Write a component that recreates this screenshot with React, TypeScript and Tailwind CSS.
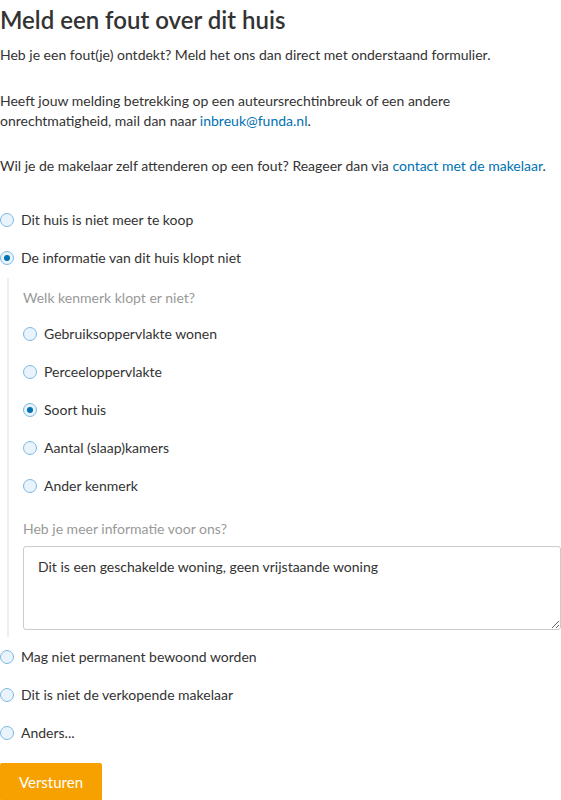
import { useState } from "react";

const outerTop = [
  { id: "niet-te-koop", label: "Dit huis is niet meer te koop" },
  { id: "info-klopt-niet", label: "De informatie van dit huis klopt niet" },
];

const outerBottom = [
  { id: "niet-bewoond", label: "Mag niet permanent bewoond worden" },
  { id: "niet-makelaar", label: "Dit is niet de verkopende makelaar" },
  { id: "anders", label: "Anders..." },
];

const kenmerken = [
  "Gebruiksoppervlakte wonen",
  "Perceeloppervlakte",
  "Soort huis",
  "Aantal (slaap)kamers",
  "Ander kenmerk",
];

function Radio({ checked, label, onClick }: { checked: boolean; label: string; onClick: () => void }) {
  return (
    <label className="flex items-center gap-[7px] h-5 cursor-pointer" onClick={onClick}>
      <span className="w-[14px] h-[14px] rounded-full border border-[#7db9e3] bg-[#e8f3fb] flex items-center justify-center shrink-0">
        {checked && <span className="w-[6px] h-[6px] rounded-full bg-[#0071b3]" />}
      </span>
      <span>{label}</span>
    </label>
  );
}

export default function App() {
  const [reason, setReason] = useState("info-klopt-niet");
  const [kenmerk, setKenmerk] = useState("Soort huis");
  const [info, setInfo] = useState("Dit is een geschakelde woning, geen vrijstaande woning");

  return (
    <div className="bg-white min-h-[800px] pt-[5px] font-['Lato',sans-serif] text-[14px] leading-5 text-[#333]">
      <h1 className="text-[24px] leading-[30px] font-semibold">Meld een fout over dit huis</h1>
      <p className="mt-[10px]">Heb je een fout(je) ontdekt? Meld het ons dan direct met onderstaand formulier.</p>
      <p className="mt-[26px]">
        Heeft jouw melding betrekking op een auteursrechtinbreuk of een andere
        <br />
        onrechtmatigheid, mail dan naar <a className="text-[#0071b3]" href="#">inbreuk@funda.nl</a>.
      </p>
      <p className="mt-[25px]">
        Wil je de makelaar zelf attenderen op een fout? Reageer dan via{" "}
        <a className="text-[#0071b3]" href="#">contact met de makelaar</a>.
      </p>

      <div className="mt-[34px] flex flex-col gap-[18px]">
        {outerTop.map(o => (
          <Radio key={o.id} checked={reason === o.id} label={o.label} onClick={() => setReason(o.id)} />
        ))}
      </div>

      <div className="mt-[10px] ml-[7px] border-l-2 border-[#eeeeee] pl-[14px] pt-[10px] pb-[7px]">
        <div className="text-[#999]">Welk kenmerk klopt er niet?</div>
        <div className="mt-[16px] flex flex-col gap-[18px]">
          {kenmerken.map(k => (
            <Radio key={k} checked={kenmerk === k} label={k} onClick={() => setKenmerk(k)} />
          ))}
        </div>
        <div className="mt-[23px] text-[#999]">Heb je meer informatie voor ons?</div>
        <textarea
          className="mt-[7px] block w-full h-[84px] border border-[#cccccc] rounded-[3px] px-[14px] py-[10px] text-[#333] outline-none"
          value={info}
          onChange={e => setInfo(e.target.value)}
        />
      </div>

      <div className="mt-[10px] flex flex-col gap-[18px]">
        {outerBottom.map(o => (
          <Radio key={o.id} checked={reason === o.id} label={o.label} onClick={() => setReason(o.id)} />
        ))}
      </div>

      <button className="mt-[20px] h-[38px] px-[19px] bg-[#f7a100] text-white text-[15px] rounded-[2px]">
        Versturen
      </button>
    </div>
  );
}
